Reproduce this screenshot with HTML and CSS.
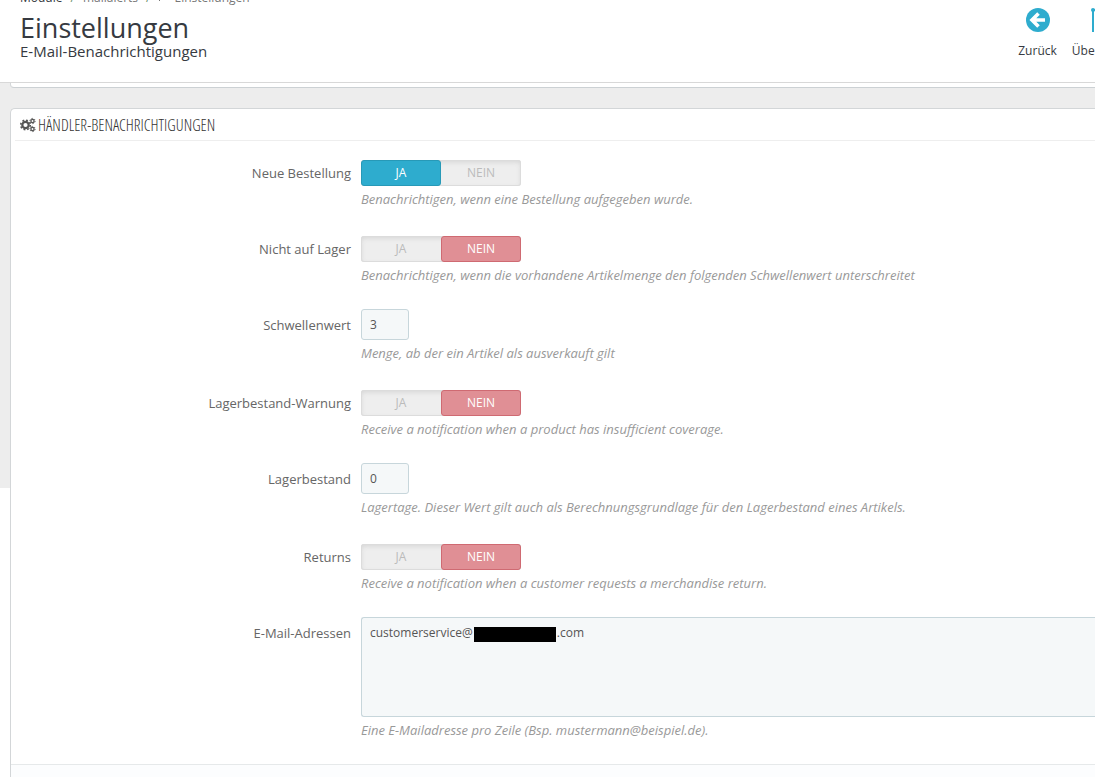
FILE: index.html
```html
<!DOCTYPE html>
<html lang="de">
<head>
    <meta charset="UTF-8">
    <meta name="viewport" content="width=device-width, initial-scale=1.0">
    <title>Einstellungen</title>
    <link rel="stylesheet" href="styles.css">
</head>
<body>
    <header class="page-head">
        <div class="page-title">
            <nav class="breadcrumb">
                <a href="#" class="current">Module</a>
                <span class="sep">/</span>
                <a href="#">mailalerts</a>
                <span class="sep">/</span>
                <svg width="8" height="10" viewBox="0 0 8 10"><path d="M1 9l3-3M2 3l4 4 2-3-3-3z" stroke="#777" fill="#777"/></svg>
                <a href="#">Einstellungen</a>
            </nav>
            <h1>Einstellungen</h1>
            <h4>E-Mail-Benachrichtigungen</h4>
        </div>
        <div class="toolbar">
            <a href="#" class="tool">
                <svg width="26" height="26" viewBox="0 0 26 26">
                    <circle cx="13" cy="13" r="12" fill="#2eacce"/>
                    <path d="M13.500 6.500l-6.500 6.500 6.500 6.500M8 13h12" fill="none" stroke="#fff" stroke-width="3.600"/>
                </svg>
                <span>Zurück</span>
            </a>
            <a href="#" class="tool">
                <svg width="26" height="26" viewBox="0 0 26 26">
                    <path d="M2 3v22M2 3h22v22" fill="none" stroke="#2eacce" stroke-width="2"/>
                    <circle cx="2" cy="3" r="2" fill="#2eacce"/>
                </svg>
                <span>Übersetzen</span>
            </a>
        </div>
    </header>

    <div class="main">
        <div class="sidebar"></div>
        <div class="content">
            <div class="panel panel-end"></div>

            <form class="panel">
                <h3 class="panel-heading">
                    <svg width="16" height="16" viewBox="0 0 16 16" fill="none" stroke="#555">
                        <circle cx="5.500" cy="8" r="3.200" stroke-width="2.200"/>
                        <circle cx="5.500" cy="8" r="4.800" stroke-width="1.600" stroke-dasharray="1.885 1.885"/>
                        <circle cx="12.500" cy="4" r="1.600" stroke-width="1.300"/>
                        <circle cx="12.500" cy="4" r="2.600" stroke-width="1" stroke-dasharray="1.360 1.360"/>
                        <circle cx="12.500" cy="12" r="1.600" stroke-width="1.300"/>
                        <circle cx="12.500" cy="12" r="2.600" stroke-width="1" stroke-dasharray="1.360 1.360"/>
                    </svg>
                    HÄNDLER-BENACHRICHTIGUNGEN
                </h3>

                <div class="form-group" role="radiogroup" aria-labelledby="lb-order">
                    <span class="label" id="lb-order">Neue Bestellung</span>
                    <div class="field">
                        <div class="switch">
                            <input type="radio" name="order" id="order_on" checked><label for="order_on">JA</label>
                            <input type="radio" name="order" id="order_off"><label for="order_off" class="off">NEIN</label>
                        </div>
                        <p class="help">Benachrichtigen, wenn eine Bestellung aufgegeben wurde.</p>
                    </div>
                </div>

                <div class="form-group" role="radiogroup" aria-labelledby="lb-stock">
                    <span class="label" id="lb-stock">Nicht auf Lager</span>
                    <div class="field">
                        <div class="switch">
                            <input type="radio" name="stock" id="stock_on"><label for="stock_on">JA</label>
                            <input type="radio" name="stock" id="stock_off" checked><label for="stock_off" class="off">NEIN</label>
                        </div>
                        <p class="help">Benachrichtigen, wenn die vorhandene Artikelmenge den folgenden Schwellenwert unterschreitet</p>
                    </div>
                </div>

                <div class="form-group">
                    <label class="label" for="threshold">Schwellenwert</label>
                    <div class="field">
                        <input type="text" class="text" id="threshold" value="3">
                        <p class="help">Menge, ab der ein Artikel als ausverkauft gilt</p>
                    </div>
                </div>

                <div class="form-group" role="radiogroup" aria-labelledby="lb-coverage">
                    <span class="label" id="lb-coverage">Lagerbestand-Warnung</span>
                    <div class="field">
                        <div class="switch">
                            <input type="radio" name="coverage" id="coverage_on"><label for="coverage_on">JA</label>
                            <input type="radio" name="coverage" id="coverage_off" checked><label for="coverage_off" class="off">NEIN</label>
                        </div>
                        <p class="help">Receive a notification when a product has insufficient coverage.</p>
                    </div>
                </div>

                <div class="form-group">
                    <label class="label" for="days">Lagerbestand</label>
                    <div class="field">
                        <input type="text" class="text" id="days" value="0">
                        <p class="help">Lagertage. Dieser Wert gilt auch als Berechnungsgrundlage für den Lagerbestand eines Artikels.</p>
                    </div>
                </div>

                <div class="form-group" role="radiogroup" aria-labelledby="lb-returns">
                    <span class="label" id="lb-returns">Returns</span>
                    <div class="field">
                        <div class="switch">
                            <input type="radio" name="returns" id="returns_on"><label for="returns_on">JA</label>
                            <input type="radio" name="returns" id="returns_off" checked><label for="returns_off" class="off">NEIN</label>
                        </div>
                        <p class="help">Receive a notification when a customer requests a merchandise return.</p>
                    </div>
                </div>

                <div class="form-group">
                    <label class="label" for="mails">E-Mail-Adressen</label>
                    <div class="field">
                        <textarea id="mails">customerservice@                           .com</textarea>
                        <div class="mask"></div>
                        <p class="help">Eine E-Mailadresse pro Zeile (Bsp. mustermann@beispiel.de).</p>
                    </div>
                </div>

                <div class="panel-footer"></div>
            </form>
        </div>
    </div>
</body>
</html>
```

FILE: styles.css
```css
* { box-sizing: border-box; }

body {
    margin: 0;
    background: #fff;
    color: #555;
    font-family: "Open Sans", Arial, sans-serif;
    font-size: 12px;
    overflow-x: hidden;
}

a {
    color: inherit;
    text-decoration: none;
}

/* header */
.page-head {
    display: flex;
    justify-content: space-between;
    height: 83px;
    padding-left: 20px;
    border-bottom: 1px solid #d8d8d8;
    overflow: hidden;
}

.page-title {
    color: #363a41;
    white-space: nowrap;
}

.breadcrumb {
    display: flex;
    align-items: center;
    gap: 8px;
    height: 16px;
    margin-top: -11px;
    color: #777;
}

.breadcrumb .current { color: #363a41; }
.breadcrumb .sep { color: #6a8f6a; }

h1, h3, h4 {
    margin: 0;
    font-weight: 400;
}

h1 {
    font-size: 27px;
    line-height: 28px;
    margin-top: 9px;
}

h4 {
    font-size: 15px;
    line-height: 18px;
}

.toolbar {
    display: flex;
    flex: none;
    gap: 15px;
    margin-right: -41px;
    padding-top: 7px;
    color: #363a41;
}

.tool {
    display: flex;
    flex-direction: column;
    align-items: center;
    gap: 9px;
    line-height: 18px;
}

/* content */
.main {
    display: flex;
    align-items: flex-start;
}

.sidebar {
    width: 10px;
    height: 405px;
    background: #ededed;
}

.content {
    flex: 1;
    min-width: 0;
    background: #ededed;
}

.panel {
    border: 1px solid #d3d6d8;
    border-right: none;
    border-bottom: none;
    border-radius: 5px 0 0 0;
    background: #fff;
}

.panel-end {
    height: 5px;
    margin-bottom: 20px;
    border-top: none;
    border-bottom: 1px solid #ccd1d4;
    border-radius: 0 0 0 4px;
}

.panel-heading {
    display: flex;
    align-items: center;
    gap: 2px;
    height: 32px;
    margin-left: 4px;
    margin-bottom: 16px;
    padding-left: 5px;
    border-bottom: 1px solid #eee;
    font-family: "Ubuntu Condensed", "Open Sans Condensed Light", "Roboto Condensed", "Open Sans Condensed", sans-serif;
    font-size: 16px;
    color: #333;
}

.form-group {
    display: flex;
    margin-bottom: 25px;
}

.label {
    flex: none;
    width: 350px;
    padding: 7px 10px 0 0;
    font-size: 13px;
    line-height: 18px;
    text-align: right;
    color: #666;
}

.field {
    position: relative;
    flex: 1;
    min-width: 0;
}

.switch {
    position: relative;
    display: flex;
    width: 160px;
    height: 26px;
    margin-top: 3px;
    border-radius: 3px;
    background: #eee;
    box-shadow: inset 0 0 0 1px #dcdcdc, inset 0 2px 5px #d4d4d4;
}

.switch input {
    position: absolute;
    opacity: 0;
}

.switch label {
    width: 80px;
    border: 1px solid transparent;
    border-radius: 3px;
    line-height: 24px;
    text-align: center;
    color: #bbb;
}

.switch input:checked + label {
    border-color: #2799b7;
    background: #2eacce;
    color: #fff;
}

.switch input:checked + .off {
    border-color: #cf6a72;
    background: #e08f95;
}

.text, textarea {
    display: block;
    border: 1px solid #c7d6db;
    border-radius: 3px;
    background: #f5f8f9;
    color: #555;
    font-family: inherit;
    font-size: 12px;
}

.text {
    width: 48px;
    height: 31px;
    padding: 6px 8px;
}

textarea {
    width: 100%;
    height: 100px;
    padding: 6px 8px;
    border-right: none;
    border-radius: 3px 0 0 3px;
    line-height: 18px;
    resize: none;
}

/* hides the domain of the address */
.mask {
    position: absolute;
    top: 10px;
    left: 113px;
    width: 82px;
    height: 15px;
    background: #000;
}

.help {
    margin: 4px 0 0;
    font-size: 13px;
    line-height: 18px;
    font-style: italic;
    color: #999;
    white-space: nowrap;
}

.panel-footer {
    height: 13px;
    border-top: 1px solid #e6e9ea;
    background: #fcfdfe;
}
```
